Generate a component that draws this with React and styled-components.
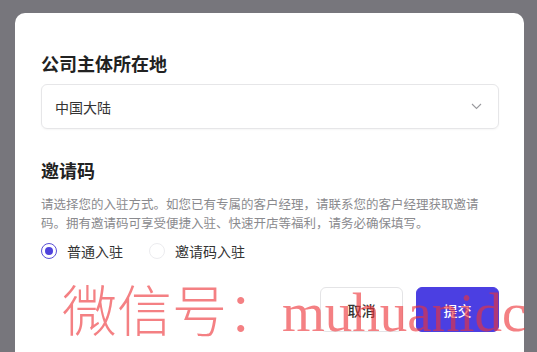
import React, { useState } from "react";
import styled, { createGlobalStyle } from "styled-components";

const GlobalStyle = createGlobalStyle`
	html, body {
		margin: 0;
		padding: 0;
		height: 352px;
		overflow: hidden;
		background: #77767c;
		font-family: "Noto Sans CJK SC", "Noto Sans", sans-serif;
	}
`;

const Page = styled.div`
	position: relative;
	height: 352px;
	padding: 13px 13px 0 15px;
	box-sizing: border-box;
	overflow: hidden;
`;

const Modal = styled.div`
	width: 509px;
	height: 400px;
	box-sizing: border-box;
	background: #fff;
	border-radius: 10px;
	padding: 38px 25px 0 26px;
	display: flex;
	flex-direction: column;
`;

const SectionTitle = styled.h2`
	margin: 0;
	font-size: 18px;
	line-height: 25px;
	font-weight: 700;
	color: #222;
	margin-top: ${(props) => props.top || 0}px;
`;

const Select = styled.div`
	margin-top: 8px;
	height: 45px;
	box-sizing: border-box;
	border: 1px solid #e6e6e8;
	border-radius: 6px;
	box-shadow: 0 1px 2px rgba(0, 0, 0, 0.04);
	padding: 0 16px 0 13px;
	display: flex;
	align-items: center;
	justify-content: space-between;
	font-size: 14px;
	color: #333;
`;

const Description = styled.p`
	margin: 11px 0 0;
	padding-right: 12px;
	font-size: 12.5px;
	line-height: 19px;
	color: #8a8a8e;
`;

const RadioGroup = styled.div`
	margin-top: 9px;
	display: flex;
	align-items: center;
	gap: 26px;
	height: 20px;
`;

const RadioLabel = styled.label`
	display: flex;
	align-items: center;
	gap: 10px;
	font-size: 14px;
	color: #333;
	cursor: pointer;
`;

const RadioCircle = styled.span`
	width: 16px;
	height: 16px;
	box-sizing: border-box;
	border-radius: 50%;
	border: 1px solid ${(props) => (props.checked ? "#5a50d6" : "#ececef")};
	display: flex;
	align-items: center;
	justify-content: center;

	&::after {
		content: "";
		width: 8px;
		height: 8px;
		border-radius: 50%;
		background: ${(props) => (props.checked ? "#4f43dc" : "transparent")};
	}
`;

const Footer = styled.div`
	margin-top: 26px;
	display: flex;
	justify-content: flex-end;
	gap: 13px;
`;

const Button = styled.button`
	width: 83px;
	height: 45px;
	border-radius: 6px;
	font-family: inherit;
	font-size: 14px;
	font-weight: 500;
	cursor: pointer;
	border: 1px solid ${(props) => (props.primary ? "#4b3fe2" : "#e4e4e6")};
	background: ${(props) => (props.primary ? "#4b3fe2" : "#fff")};
	color: ${(props) => (props.primary ? "#fff" : "#333")};
`;

const Watermark = styled.div`
	position: absolute;
	left: 62px;
	top: 285px;
	font-family: "Liberation Serif", "Noto Sans CJK SC", serif;
	font-size: 55px;
	font-weight: 300;
	line-height: 1;
	white-space: nowrap;
	color: rgba(238, 50, 55, 0.62);
	pointer-events: none;
`;

const Chevron = () => (
	<svg width="11" height="7" viewBox="0 0 11 7" fill="none">
		<polyline points="1,1 5.5,5.5 10,1" stroke="#9a9a9e" strokeWidth="1.1" />
	</svg>
);

export default function App() {
	const [mode, setMode] = useState("normal");

	const options = [
		{ key: "normal", label: "普通入驻" },
		{ key: "invite", label: "邀请码入驻" },
	];

	return (
		<>
			<GlobalStyle />
			<Page>
				<Modal>
					<SectionTitle>公司主体所在地</SectionTitle>
					<Select>
						<span>中国大陆</span>
						<Chevron />
					</Select>
					<SectionTitle top={29}>邀请码</SectionTitle>
					<Description>
						请选择您的入驻方式。如您已有专属的客户经理，请联系您的客户经理获取邀请码。拥有邀请码可享受便捷入驻、快速开店等福利，请务必确保填写。
					</Description>
					<RadioGroup>
						{options.map((o) => (
							<RadioLabel key={o.key} onClick={() => setMode(o.key)}>
								<RadioCircle checked={mode === o.key} />
								{o.label}
							</RadioLabel>
						))}
					</RadioGroup>
					<Footer>
						<Button>取消</Button>
						<Button primary>提交</Button>
					</Footer>
				</Modal>
				<Watermark>微信号：muhuanidc</Watermark>
			</Page>
		</>
	);
}
